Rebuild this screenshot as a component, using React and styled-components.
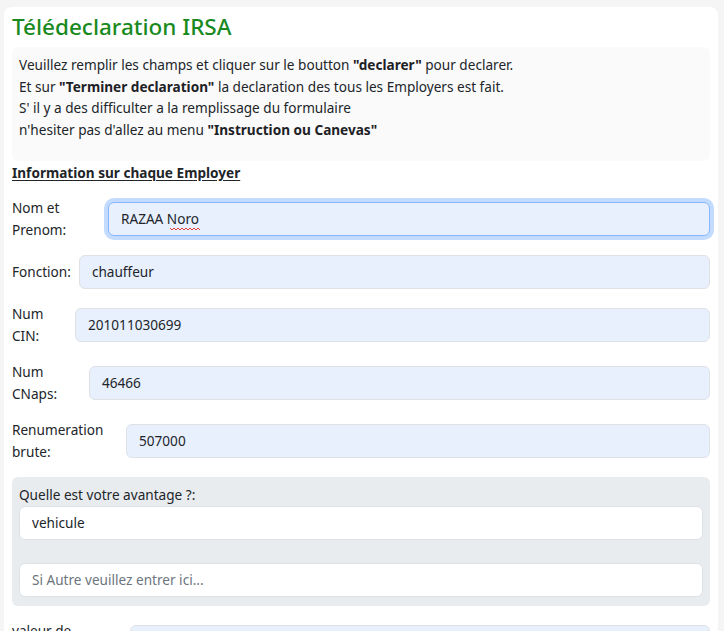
import React from 'react';
import styled, { createGlobalStyle, css } from 'styled-components';

const GlobalStyle = createGlobalStyle`
  html, body {
    margin: 0;
    padding: 0;
    background: #f5f5f5;
  }
  body {
    font-family: "Noto Sans", "Open Sans", sans-serif;
    font-size: 14px;
    color: #212529;
  }
  * { box-sizing: border-box; }
`;

const Page = styled.div`
  padding: 7px 6px 0 4px;
  min-height: 631px;
`;

const Card = styled.main`
  background: #fff;
  border-radius: 8px;
  padding: 6px 8px 20px 8px;
  min-height: 700px;
`;

const Title = styled.h4`
  margin: 0 0 7px 0;
  font-size: 22.5px;
  line-height: 27px;
  font-weight: 500;
  color: #1a8a1f;
`;

const Notice = styled.div`
  background: #fafafa;
  border-radius: 6px;
  padding: 7px 7px 20px 7px;
  font-size: 13.6px;
  line-height: 21.7px;
  p { margin: 0; }
  b { font-weight: 700; color: #1d2125; }
`;

const SectionTitle = styled.h6`
  margin: 1px 0 14px 0;
  font-size: 13.6px;
  line-height: 21px;
  font-weight: 700;
  text-decoration: underline;
  text-underline-offset: 2px;
`;

const Row = styled.div`
  display: flex;
  align-items: center;
  gap: 8px;
  margin-bottom: 14px;
`;

const Label = styled.label`
  flex: 0 0 ${({ $w }) => $w}px;
  font-size: 13.6px;
  line-height: 22px;
`;

const Field = styled.div`
  position: relative;
  flex: 1;
  display: flex;
`;

const Input = styled.input`
  width: 100%;
  height: 34px;
  padding: 0 12px;
  font-family: inherit;
  font-size: 13.6px;
  color: #212529;
  background: ${({ $plain }) => ($plain ? '#fff' : '#e8f0fe')};
  border: 1px solid #dee2e6;
  border-radius: 6px;
  outline: none;
  &::placeholder { color: #6c757d; }
  ${({ $focused }) =>
    $focused &&
    css`
      border-color: #86b7fe;
      box-shadow: 0 0 0 4px rgba(13, 110, 253, 0.25);
    `}
`;

const Squiggle = styled.svg`
  position: absolute;
  left: 62px;
  top: 25px;
  width: 31px;
  height: 4px;
`;

const Group = styled.div`
  background: #e9ecef;
  border-radius: 6px;
  padding: 7px 7px 9px 7px;
  margin-bottom: 14px;
  display: flex;
  flex-direction: column;
`;

const GroupLabel = styled.label`
  font-size: 13.6px;
  line-height: 21px;
  margin-bottom: 1px;
`;

const GroupInputs = styled.div`
  display: flex;
  flex-direction: column;
  gap: 23px;
`;

const rows = [
  { label: 'Nom et Prenom:', w: 88, value: 'RAZAA Noro', focused: true },
  { label: 'Fonction:', w: 58, value: 'chauffeur' },
  { label: 'Num CIN:', w: 55, value: '201011030699' },
  { label: 'Num CNaps:', w: 69, value: '46466' },
  { label: 'Renumeration brute:', w: 106, value: '507000' },
];

export default function App() {
  return (
    <>
      <GlobalStyle />
      <Page>
        <Card>
          <Title>Télédeclaration IRSA</Title>
          <Notice>
            <p>Veuillez remplir les champs et cliquer sur le boutton <b>"declarer"</b> pour declarer.</p>
            <p>Et sur <b>"Terminer declaration"</b> la declaration des tous les Employers est fait.</p>
            <p>S' il y a des difficulter a la remplissage du formulaire</p>
            <p>n'hesiter pas d'allez au menu <b>"Instruction ou Canevas"</b></p>
          </Notice>
          <SectionTitle>Information sur chaque Employer</SectionTitle>

          {rows.map((r) => (
            <Row key={r.label}>
              <Label $w={r.w}>{r.label}</Label>
              <Field>
                <Input defaultValue={r.value} $focused={r.focused} spellCheck={false} />
                {r.focused && (
                  <Squiggle viewBox="0 0 31 4">
                    <path d="M0 1 L2 3 L4 1 L6 3 L8 1 L10 3 L12 1 L14 3 L16 1 L18 3 L20 1 L22 3 L24 1 L26 3 L28 1 L30 3" fill="none" stroke="#e0403a" strokeWidth="1" />
                  </Squiggle>
                )}
              </Field>
            </Row>
          ))}

          <Group>
            <GroupLabel>Quelle est votre avantage ?:</GroupLabel>
            <GroupInputs>
              <Input $plain defaultValue="vehicule" />
              <Input $plain placeholder="Si Autre veuillez entrer ici..." />
            </GroupInputs>
          </Group>

          <Row>
            <Label $w={110}>valeur de l'avantage:</Label>
            <Field>
              <Input defaultValue="" />
            </Field>
          </Row>
        </Card>
      </Page>
    </>
  );
}
